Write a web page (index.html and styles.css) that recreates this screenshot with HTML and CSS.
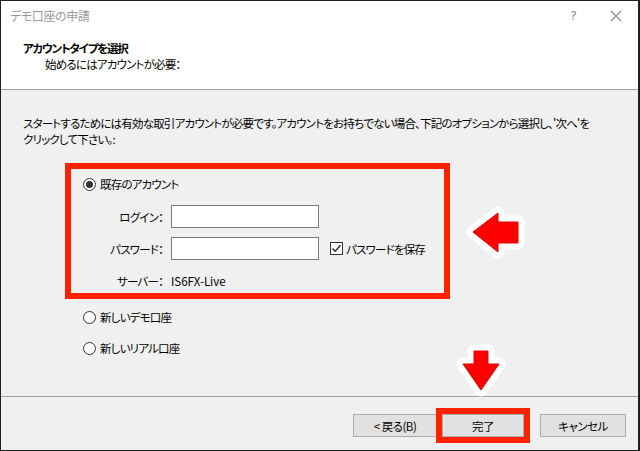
FILE: index.html
```html
<!DOCTYPE html>
<html lang="ja">
<head>
  <meta charset="UTF-8" />
  <title>デモ口座の申請</title>
  <link rel="stylesheet" href="styles.css">
</head>
<body>
  <div class="dialog">
    <div class="titlebar">
      <span class="title">デモ口座の申請</span>
      <div class="titlebar-buttons">
        <span class="help">?</span>
        <svg class="close" width="12" height="12" viewBox="0 0 12 12">
          <path d="M1 1L11 11M11 1L1 11" stroke="#8a8a8a" stroke-width="1.2" fill="none"/>
        </svg>
      </div>
    </div>

    <div class="header">
      <div class="header-title">アカウントタイプを選択</div>
      <div class="header-sub">始めるにはアカウントが必要：</div>
    </div>

    <div class="content">
      <p class="intro">スタートするためには有効な取引アカウントが必要です。アカウントをお持ちでない場合、下記のオプションから選択し、'次へ'を<br>クリックして下さい。:</p>

      <div class="account-group">
        <label class="radio-row">
          <span class="radio checked"></span>既存のアカウント
        </label>
        <div class="field-row login-row">
          <span class="field-label">ログイン：</span>
          <input class="field-input" type="text">
        </div>
        <div class="field-row password-row">
          <span class="field-label">パスワード：</span>
          <input class="field-input" type="password">
          <label class="check-row"><span class="checkbox">
            <svg width="11" height="11" viewBox="0 0 11 11"><path d="M1.5 5.5L4.2 8.3L9.5 2.2" stroke="#222" stroke-width="1.3" fill="none"/></svg>
          </span>パスワードを保存</label>
        </div>
        <div class="field-row server-row">
          <span class="field-label">サーバー：</span>
          <span class="server-name">IS6FX-Live</span>
        </div>
      </div>

      <label class="radio-row option-row first">
        <span class="radio"></span>新しいデモ口座
      </label>
      <label class="radio-row option-row">
        <span class="radio"></span>新しいリアル口座
      </label>
    </div>

    <div class="footer">
      <button class="btn btn-back">&lt; 戻る(B)</button>
      <button class="btn btn-finish">完了</button>
      <button class="btn btn-cancel">キャンセル</button>
    </div>

    <!-- pointer arrows drawn over the dialog -->
    <svg class="pointer pointer-left" width="70" height="60" viewBox="460 202 70 60">
      <path d="M473 232L498 213L498 222L518 222L518 243L498 243L498 252Z" fill="#fff" stroke="#fff" stroke-width="13" stroke-linejoin="round"/>
      <path d="M473 232L498 213L498 222L518 222L518 243L498 243L498 252Z" fill="#ff0000" stroke="#e00000" stroke-width="1"/>
    </svg>
    <svg class="pointer pointer-down" width="60" height="62" viewBox="451 340 60 62">
      <path d="M474 351L488 351L488 364L499 364L481 390L463 364L474 364Z" fill="#fff" stroke="#fff" stroke-width="13" stroke-linejoin="round"/>
      <path d="M474 351L488 351L488 364L499 364L481 390L463 364L474 364Z" fill="#ff0000" stroke="#e00000" stroke-width="1"/>
    </svg>
  </div>
</body>
</html>
```

FILE: styles.css
```css
:root {
  --face: #f0f0f0;
  --line: #a0a0a0;
  --mark: #ff2200;
  --text: #000000;
}

* {
  box-sizing: border-box;
  margin: 0;
  padding: 0;
}

body {
  background: #1f1f1f;
  font-family: "Noto Sans CJK JP", "Noto Sans", sans-serif;
  font-feature-settings: "palt";
  font-size: 11.5px;
  letter-spacing: -0.8px;
  line-height: 16px;
  color: var(--text);
}

.dialog {
  position: relative;
  margin: 1px 0 0 1px;
  width: 637px;
  height: 449px;
  background: var(--face);
  display: flex;
  flex-direction: column;
  overflow: hidden;
}

/* title bar */
.titlebar {
  height: 29px;
  background: #fff;
  display: flex;
  align-items: center;
  justify-content: space-between;
  padding: 0 0 0 9px;
}

.title {
  color: #9a9a9a;
  font-size: 12px;
  letter-spacing: -0.4px;
}

.titlebar-buttons {
  display: flex;
  align-items: center;
  gap: 34px;
  padding-right: 16px;
}

.help {
  color: #8a8a8a;
  font-family: "DejaVu Sans", sans-serif;
  font-size: 13px;
}

/* white wizard header */
.header {
  height: 60px;
  background: #fff;
  border-bottom: 1px solid var(--line);
  padding: 10px 0 0 22px;
}

.header-title {
  font-weight: bold;
  letter-spacing: -1.2px;
}

.header-sub {
  padding-left: 22px;
}

/* page body */
.content {
  height: 306px;
  padding: 25px 0 0 22px;
  display: flex;
  flex-direction: column;
}

.intro {
  white-space: nowrap;
}

.account-group {
  margin: 16px 0 0 42px;
  width: 385px;
  height: 136px;
  border: 6px solid var(--mark);
  padding: 7px 0 0 12px;
  display: flex;
  flex-direction: column;
}

.radio-row {
  display: flex;
  align-items: center;
  height: 16px;
  gap: 4px;
}

.radio {
  width: 13px;
  height: 13px;
  border: 1px solid #333;
  border-radius: 50%;
  background: #fff;
  display: flex;
  align-items: center;
  justify-content: center;
}

.radio.checked::after {
  content: "";
  width: 7px;
  height: 7px;
  border-radius: 50%;
  background: #333;
}

.field-row {
  display: flex;
  align-items: center;
}

.field-label {
  width: 88px;
  padding-right: 8px;
  text-align: right;
}

.field-input {
  width: 148px;
  height: 23px;
  border: 1px solid #7a7a7a;
  background: #fff;
  outline: none;
}

.login-row {
  margin-top: 13px;
  height: 23px;
}

.password-row {
  margin-top: 9px;
  height: 23px;
}

.check-row {
  display: flex;
  align-items: center;
  gap: 3px;
  margin-left: 11px;
}

.checkbox {
  width: 13px;
  height: 13px;
  border: 1px solid #333;
  background: #fff;
  display: flex;
  align-items: center;
  justify-content: center;
}

.server-row {
  margin-top: 13px;
  height: 16px;
}

.server-name {
  letter-spacing: 0;
}

.option-row {
  margin-left: 60px;
  margin-top: 15px;
}

.option-row.first {
  margin-top: 10px;
}

/* wizard buttons */
.footer {
  flex: 1;
  border-top: 1px solid var(--line);
  display: flex;
  align-items: flex-start;
  padding: 17px 0 0 352px;
}

.btn {
  height: 23px;
  background: #e1e1e1;
  border: 1px solid #adadad;
  font-family: inherit;
  font-feature-settings: "palt";
  font-size: 11.5px;
  letter-spacing: -0.5px;
  color: var(--text);
}

.btn-back {
  width: 84px;
}

.btn-finish {
  width: 82px;
  margin-left: 5px;
  outline: 6px solid var(--mark);
}

.btn-cancel {
  width: 86px;
  margin-left: 16px;
}

.pointer {
  position: absolute;
}

.pointer-left {
  left: 459px;
  top: 201px;
}

.pointer-down {
  left: 450px;
  top: 339px;
}
```
